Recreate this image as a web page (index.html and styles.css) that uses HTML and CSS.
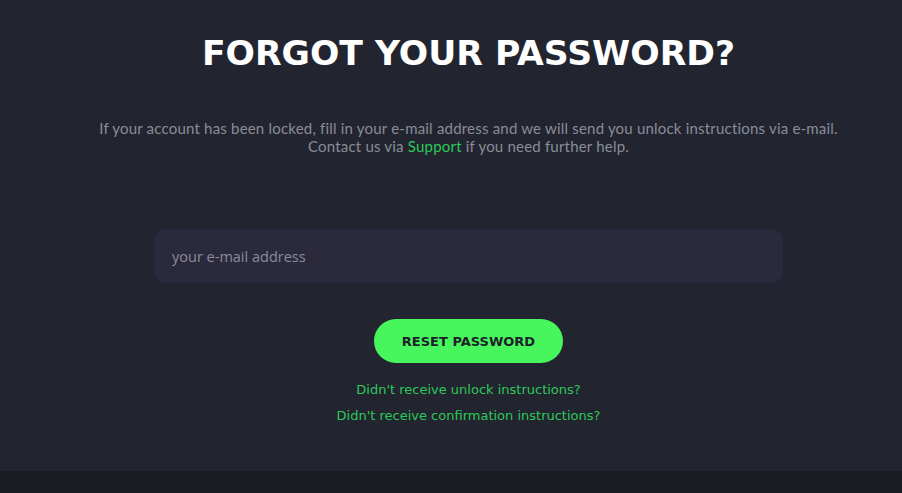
FILE: index.html
```html
<!DOCTYPE html>
<html lang="en">
<head>
<meta charset="utf-8">
<title>Forgot your password?</title>
<link rel="stylesheet" href="styles.css">
</head>
<body>
<main class="page">
  <section class="panel">
    <h1 class="title">FORGOT YOUR PASSWORD?</h1>
    <p class="intro">If your account has been locked, fill in your e-mail address and we will send you unlock instructions via e-mail.<br>Contact us via <a class="support" href="#">Support</a> if you need further help.</p>
    <form class="form">
      <input class="email" type="email" placeholder="your e-mail address">
      <button class="reset" type="button">RESET PASSWORD</button>
    </form>
    <div class="links">
      <a class="link" href="#">Didn't receive unlock instructions?</a>
      <a class="link" href="#">Didn't receive confirmation instructions?</a>
    </div>
  </section>
</main>
<footer class="footer"></footer>
</body>
</html>
```
FILE: styles.css
```css
html, body {
  margin: 0;
  padding: 0;
  background: #1c1c25;
  font-family: "DejaVu Sans", sans-serif;
}
.page {
  background: #22252f;
  height: 471px;
  padding-left: 35px;
  box-sizing: border-box;
}
.panel {
  display: flex;
  flex-direction: column;
  align-items: center;
  padding-top: 33px;
}
.title {
  margin: 0;
  color: #ffffff;
  font-family: "DejaVu Sans", sans-serif;
  font-weight: 700;
  font-size: 34.6px;
  line-height: 40px;
}
.intro {
  margin: 46px 0 0;
  color: #8a8c98;
  font-family: Lato, sans-serif;
  font-size: 15px;
  line-height: 18px;
  text-align: center;
  letter-spacing: 0.2px;
}
.support {
  color: #2dc85a;
  text-decoration: none;
}
.form {
  display: flex;
  flex-direction: column;
  align-items: center;
  margin-top: 74px;
}
.email {
  width: 629px;
  height: 54px;
  box-sizing: border-box;
  border: none;
  border-radius: 12px;
  background: #2a2a3c;
  padding: 0 18px;
  color: #c8c8d4;
  font-family: "Open Sans", sans-serif;
  font-size: 14.5px;
  outline: none;
}
.email::placeholder {
  color: #8a8a9c;
}
.reset {
  margin-top: 36px;
  width: 189px;
  height: 44px;
  border: none;
  border-radius: 22px;
  background: #47f55c;
  color: #1d1f2b;
  font-family: "DejaVu Sans", sans-serif;
  font-weight: 700;
  font-size: 13px;
  cursor: pointer;
}
.links {
  display: flex;
  flex-direction: column;
  align-items: center;
  margin-top: 18px;
  gap: 8px;
}
.link {
  color: #2dc85a;
  text-decoration: none;
  font-family: "DejaVu Sans", sans-serif;
  font-size: 13px;
  line-height: 18px;
}
.footer {
  height: 22px;
  background: #1c1c25;
}
```
